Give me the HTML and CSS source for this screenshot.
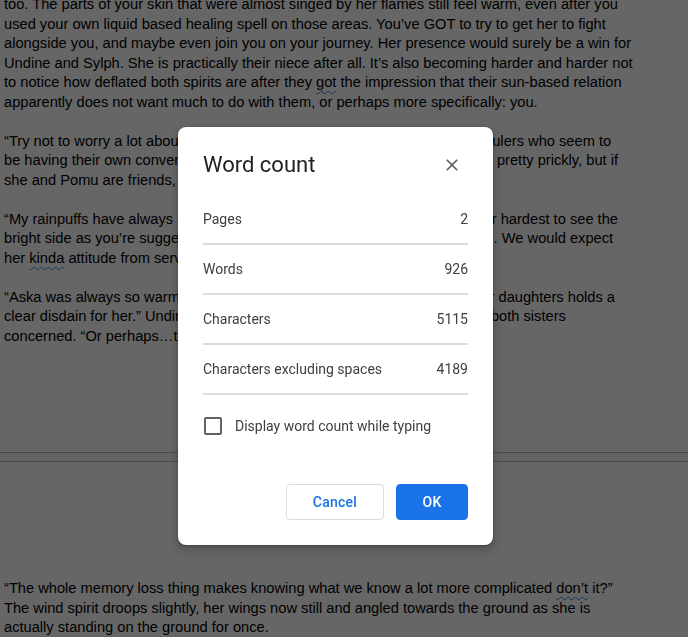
FILE: index.html
```html
<!DOCTYPE html>
<html lang="en">
<head>
<meta charset="utf-8">
<title>Word count</title>
<link rel="stylesheet" href="styles.css">
</head>
<body>
<div class="doc">
  <div class="page page1">
    <div class="para">
      <div class="ln">too. The parts of your skin that were almost singed by her flames still feel warm, even after you</div>
      <div class="ln">used your own liquid based healing spell on those areas. You’ve GOT to try to get her to fight</div>
      <div class="ln">alongside you, and maybe even join you on your journey. Her presence would surely be a win for</div>
      <div class="ln">Undine and Sylph. She is practically their niece after all. It’s also becoming harder and harder not</div>
      <div class="ln">to notice how deflated both spirits are after they <span class="sp">got</span> the impression that their sun-based relation</div>
      <div class="ln">apparently does not want much to do with them, or perhaps more specifically: you.</div>
    </div>
    <div class="para">
      <div class="ln">“Try not to worry a lot about it. Aska is just one of those fiery old elemental rulers who seem to</div>
      <div class="ln">be having their own conversations about the state of the world. Yes, Aska is pretty prickly, but if</div>
      <div class="ln">she and Pomu are friends, then surely she can’t be all that bad.”</div>
    </div>
    <div class="para">
      <div class="ln">“My rainpuffs have always had a soft spot for Aska, and they always try their hardest to see the</div>
      <div class="ln">bright side as you’re suggesting, but she is just really hard to deal with at all. We would expect</div>
      <div class="ln">her <span class="sp">kinda</span> attitude from servants of Aska, not from her own kin.”</div>
    </div>
    <div class="para">
      <div class="ln">“Aska was always so warm and kind to everyone, so the fact that one of her daughters holds a</div>
      <div class="ln">clear disdain for her.” Undine sighs very softly, and Sylph nods too, leaving both sisters</div>
      <div class="ln">concerned. “Or perhaps…there is more to it than we know.”</div>
    </div>
  </div>
  <div class="gap"></div>
  <div class="page page2">
    <div class="para">
      <div class="ln">“The whole memory loss thing makes knowing what we know a lot more complicated <span class="sp">don’t</span> it?”</div>
      <div class="ln">The wind spirit droops slightly, her wings now still and angled towards the ground as she is</div>
      <div class="ln">actually standing on the ground for once.</div>
    </div>
  </div>
</div>

<div class="scrim">
  <div class="dialog" role="dialog" aria-label="Word count">
    <div class="dlg-head">
      <h1 class="dlg-title">Word count</h1>
      <svg class="close" viewBox="0 0 24 24" aria-label="Close"><path d="M19 6.41L17.59 5 12 10.59 6.41 5 5 6.41 10.59 12 5 17.59 6.41 19 12 13.41 17.59 19 19 17.59 13.41 12z"/></svg>
    </div>
    <div class="row"><span>Pages</span><span>2</span></div>
    <div class="row"><span>Words</span><span>926</span></div>
    <div class="row"><span>Characters</span><span>5115</span></div>
    <div class="row"><span>Characters excluding spaces</span><span>4189</span></div>
    <label class="check"><span class="box"></span><span>Display word count while typing</span></label>
    <div class="actions">
      <button class="btn btn-cancel">Cancel</button>
      <button class="btn btn-ok">OK</button>
    </div>
  </div>
</div>
</body>
</html>
```
FILE: styles.css
```css
html, body {
  margin: 0;
  height: 637px;
  overflow: hidden;
}
body {
  background: #f8f9fa;
  font-family: "Liberation Sans", Arial, sans-serif;
  font-size: 14.67px;
  line-height: 19.5px;
  color: #000;
}
.doc {
  margin-top: -5px;
}
.page {
  background: #fff;
  padding-left: 4px;
}
.page1 {
  height: 458px;
  border-bottom: 1px solid #b4b4b4;
  box-sizing: border-box;
}
.gap {
  height: 8px;
}
.page2 {
  border-top: 1px solid #b4b4b4;
  padding-top: 117px;
  height: 175px;
  box-sizing: border-box;
}
.para {
  margin-bottom: 19.5px;
}
.ln {
  white-space: nowrap;
}
.sp {
  text-decoration: underline wavy #4285f4;
  text-decoration-thickness: 1px;
  text-underline-offset: 3px;
}
.scrim {
  position: fixed;
  inset: 0;
  background: rgba(0, 0, 0, 0.6);
}
.dialog {
  position: absolute;
  left: 178px;
  top: 127px;
  width: 315px;
  box-sizing: border-box;
  padding: 24px 25px 25px;
  background: #fff;
  border-radius: 8px;
  box-shadow: 0 4px 8px 3px rgba(0, 0, 0, 0.15), 0 1px 3px rgba(0, 0, 0, 0.3);
  font-family: Roboto, "Liberation Sans", Arial, sans-serif;
  color: #3c4043;
}
.dlg-head {
  display: flex;
  align-items: center;
  justify-content: space-between;
  height: 28px;
  margin-bottom: 16px;
}
.dlg-title {
  margin: 0;
  font-size: 22px;
  font-weight: 400;
  line-height: 28px;
  color: #202124;
}
.close {
  width: 20px;
  height: 20px;
  margin-right: 6px;
  fill: #5f6368;
}
.row {
  display: flex;
  align-items: center;
  justify-content: space-between;
  height: 48px;
  border-bottom: 2px solid #dadce0;
  font-size: 14px;
  line-height: 20px;
}
.check {
  display: flex;
  align-items: center;
  margin-top: 22px;
  height: 18px;
  font-size: 14px;
  line-height: 20px;
}
.box {
  width: 18px;
  height: 18px;
  box-sizing: border-box;
  border: 2px solid #5f6368;
  border-radius: 2px;
  margin-left: 1px;
  margin-right: 13px;
}
.actions {
  display: flex;
  justify-content: flex-end;
  gap: 12px;
  margin-top: 49px;
}
.btn {
  height: 36px;
  box-sizing: border-box;
  border-radius: 4px;
  font-family: Roboto, "Liberation Sans", Arial, sans-serif;
  font-size: 14px;
  font-weight: 500;
  letter-spacing: 0.25px;
  padding: 0 24px;
}
.btn-cancel {
  width: 98px;
  background: #fff;
  border: 1px solid #dadce0;
  color: #1a73e8;
}
.btn-ok {
  width: 72px;
  background: #1a73e8;
  border: 1px solid #1a73e8;
  color: #fff;
}
```
